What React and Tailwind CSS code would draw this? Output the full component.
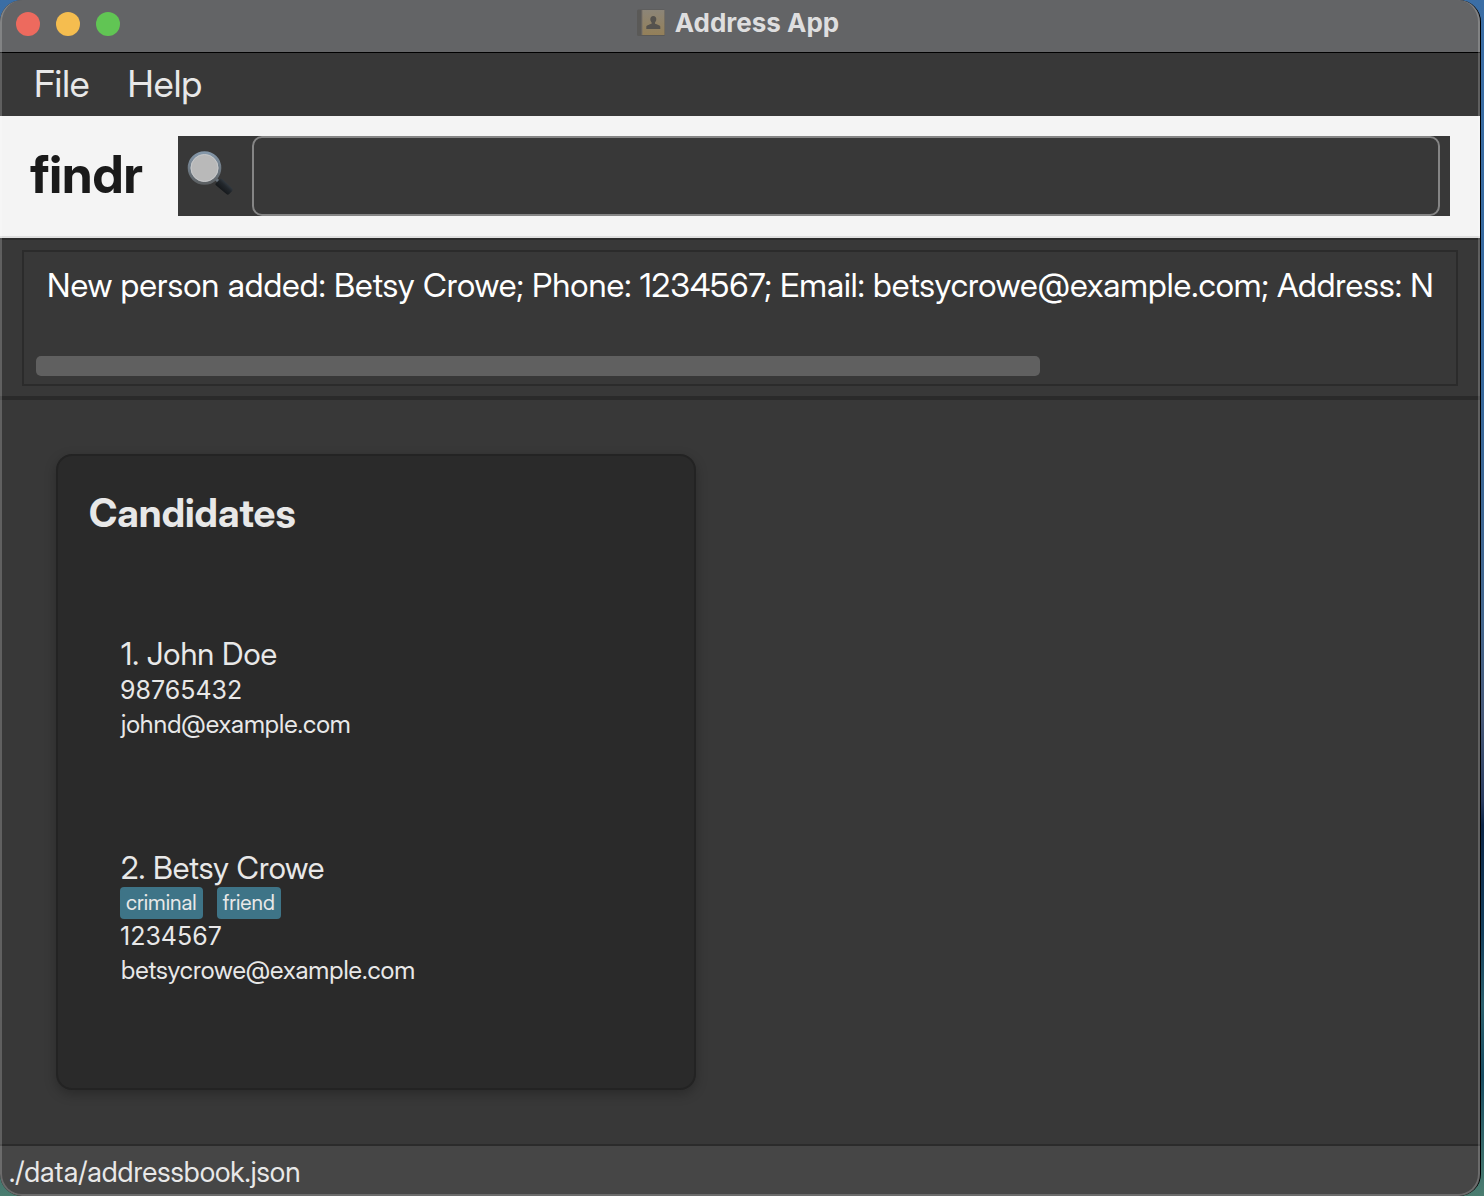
import React from "react";

const people = [
  { id: 1, name: "John Doe", tags: [], phone: "98765432", email: "johnd@example.com" },
  { id: 2, name: "Betsy Crowe", tags: ["criminal", "friend"], phone: "1234567", email: "betsycrowe@example.com" },
];

function AddressBookIcon() {
  return (
    <svg width="28" height="28" viewBox="0 0 28 28" aria-hidden="true">
      <defs>
        <linearGradient id="cover" x1="0" y1="0" x2="0" y2="1">
          <stop offset="0" stopColor="#8c8578" />
          <stop offset="1" stopColor="#948059" />
        </linearGradient>
      </defs>
      <rect x="0" y="0.5" width="28" height="26.5" rx="1.5" fill="#5a5957" />
      <rect x="5" y="1" width="22.500" height="25" fill="url(#cover)" />
      <rect x="4.500" y="1" width="1" height="25" fill="#777168" />
      <path d="M16.300 7c-2 0-3 1.500-3 3.300 0 1.400.6 2.500 1.300 3.200v1.200c-2 .9-4.800 1.300-5.300 2.700V20h14v-2.600c-.5-1.400-3.300-1.800-5.300-2.700v-1.200c.7-.7 1.300-1.800 1.300-3.200C19.300 8.500 18.300 7 16.300 7z" fill="#55524e" />
    </svg>
  );
}

function MagnifierIcon() {
  return (
    <svg width="48" height="48" viewBox="0 0 48 48" aria-hidden="true">
      <defs>
        <linearGradient id="rim" x1="0" y1="0" x2="0" y2="1">
          <stop offset="0" stopColor="#8497a9" />
          <stop offset="0.5" stopColor="#707c87" />
          <stop offset="1" stopColor="#5c6063" />
        </linearGradient>
        <linearGradient id="handle" x1="1" y1="0" x2="0" y2="1">
          <stop offset="0" stopColor="#5a656f" />
          <stop offset="0.45" stopColor="#22272c" />
          <stop offset="1" stopColor="#050505" />
        </linearGradient>
      </defs>
      <path d="M29 28l4 4" stroke="#68737d" strokeWidth="3" />
      <path d="M28.800 32.300l4.200-4.300q1.200-1 2.300 0l9.900 9.300q1.200 1.300 0 2.600l-3 3.200q-1.400 1.200-2.800 0l-10.500-8.800q-1.100-1-.1-2z" fill="url(#handle)" />
      <circle cx="17.500" cy="17" r="15.300" fill="#b9b9b9" stroke="url(#rim)" strokeWidth="3" />
      <circle cx="17.500" cy="17" r="13.500" fill="none" stroke="#c6c8ca" strokeWidth="1" />
    </svg>
  );
}

function Person({ person }) {
  return (
    <li className="flex flex-col items-start">
      <h3 className="pl-px text-[31px] leading-[38px]">{person.id}. {person.name}</h3>
      {person.tags.length > 0 && (
        <ul className="flex gap-[14px]">
          {person.tags.map((tag) => (
            <li key={tag} className="rounded-[4px] bg-[#3e7487] px-[6px] text-[21px] leading-[32px]">{tag}</li>
          ))}
        </ul>
      )}
      <p className="font-['Inter',sans-serif] text-[25px] leading-[34px]">{person.phone}</p>
      <p className="pl-px text-[25px] leading-[34px]">{person.email}</p>
    </li>
  );
}

export default function App() {
  return (
    <div className="min-h-screen bg-[linear-gradient(180deg,#3b6ea5_0%,#34679c_30%,#42658c_52%,#465877_60%,#293c5f_67%,#0b2546_69%,#143f5c_78%,#2b5f6c_84%,#184c61_90%,#4b7d70_100%)] pr-[3px] font-['Inter_Display','Inter',sans-serif] text-[#e8e8e8]">
      <div className="relative flex min-h-screen flex-col overflow-hidden rounded-[22px] border-r border-black bg-[#383838]">
        <header className="grid h-[53px] grid-cols-[1fr_auto_1fr] items-center border-b border-black bg-[#636466] px-4 pb-[5px]">
          <div className="flex gap-4">
            <button aria-label="Close" className="size-6 rounded-full bg-[#ed6a5e]" />
            <button aria-label="Minimize" className="size-6 rounded-full bg-[#f5bd4f]" />
            <button aria-label="Zoom" className="size-6 rounded-full bg-[#61c554]" />
          </div>
          <div className="flex items-center gap-[10px] pr-1 pb-[2px]">
            <AddressBookIcon />
            <h1 className="font-['Inter',sans-serif] text-[26px] leading-8 font-bold text-[#dededf]">Address App</h1>
          </div>
        </header>

        <nav className="flex h-[63px] items-center gap-[38px] px-[34px] pb-[2px] text-[37px] leading-[44px]">
          <button>File</button>
          <button>Help</button>
        </nav>

        <section className="flex items-center border-b-2 border-[#dedede] bg-[#f4f4f4] px-[30px] py-5">
          <h2 className="w-[148px] shrink-0 pb-[2px] text-[52px] leading-[72px] font-bold text-[#1a1a1a]">findr</h2>
          <form className="flex h-20 flex-1 bg-[#383838] pr-[10px]" onSubmit={(e) => e.preventDefault()}>
            <label htmlFor="search" className="w-[74px] shrink-0 pt-[15px] pl-[9px]">
              <MagnifierIcon />
            </label>
            <input id="search" type="text" aria-label="Search" className="min-w-0 flex-1 rounded-[10px] border-2 border-[#858585] bg-transparent px-4 text-[33px] outline-none" />
          </form>
        </section>

        <section className="border-t-2 border-b-4 border-t-[#2b2b2b] border-b-[#2a2a2a] px-[22px] py-[10px]">
          <div className="flex h-[136px] flex-col justify-between border-2 border-[#2b2b2b] pt-[11px] pb-2 pl-3">
            <textarea
              aria-label="Result"
              readOnly
              wrap="off"
              rows={1}
              className="block h-[44px] w-full resize-none overflow-hidden pl-[11px] text-[33px] leading-[44px] text-white outline-none"
              defaultValue="New person added: Betsy Crowe; Phone: 1234567; Email: betsycrowe@example.com; Address: N"
            />
            <div className="mr-[6px]">
              <div className="h-5 w-[71%] rounded-[5px] bg-[#606060]" />
            </div>
          </div>
        </section>

        <main className="flex flex-1 px-[56px] py-[54px]">
          <section className="w-[640px] rounded-2xl border-2 border-[#232323] bg-[#2a2a2a] px-[30px] pt-[31px] shadow-[0_4px_12px_rgba(0,0,0,0.25)]">
            <h2 className="pl-px text-[39px] leading-[52px] font-bold">Candidates</h2>
            <ul className="mt-24 flex flex-col gap-[108px] pl-8">
              {people.map((p) => <Person key={p.id} person={p} />)}
            </ul>
          </section>
        </main>

        <footer className="h-[52px] border-t-2 border-[#2b2b2b] bg-[#464646] pl-[9px] text-[28px] leading-[52px]">./data/addressbook.json</footer>
        <div className="pointer-events-none absolute inset-0 rounded-[22px] border-2 border-t-0 border-white/20" />
      </div>
    </div>
  );
}
